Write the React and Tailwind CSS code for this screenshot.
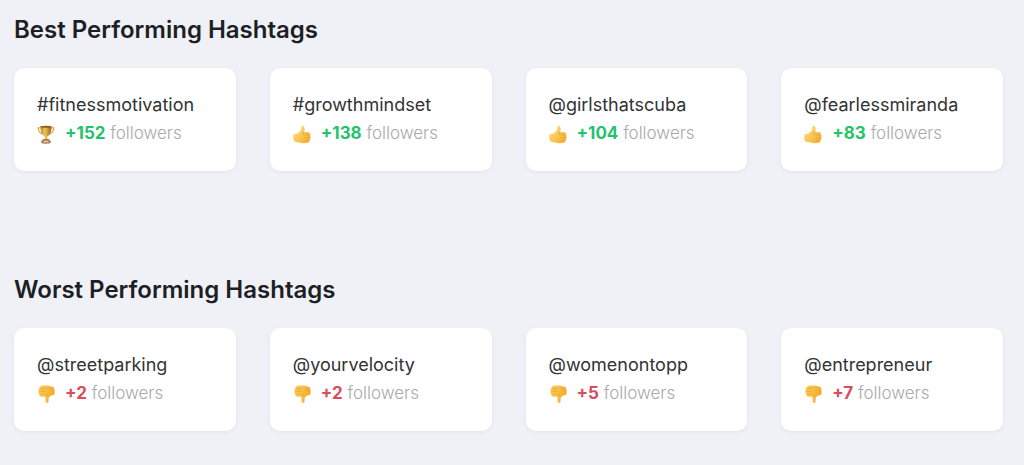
import React from 'react';

const best = [
  { name: '#fitnessmotivation', count: 152, icon: 'trophy' },
  { name: '#growthmindset', count: 138, icon: 'up' },
  { name: '@girlsthatscuba', count: 104, icon: 'up' },
  { name: '@fearlessmiranda', count: 83, icon: 'up' }
];

const worst = [
  { name: '@streetparking', count: 2, icon: 'down' },
  { name: '@yourvelocity', count: 2, icon: 'down' },
  { name: '@womenontopp', count: 5, icon: 'down' },
  { name: '@entrepreneur', count: 7, icon: 'down' }
];

function Trophy() {
  return (
    <svg className="w-[18px] h-5 shrink-0" viewBox="0 0 18 20" aria-hidden="true">
      <defs>
        <linearGradient id="cup" x1="0" x2="1" y1="0" y2="0">
          <stop offset="0" stopColor="#b9801f" />
          <stop offset="0.4" stopColor="#f0c75a" />
          <stop offset="1" stopColor="#9a6213" />
        </linearGradient>
      </defs>
      <g transform="translate(0 .8)">
        <path d="M4.500 3H1.200c0 3.600 1.600 5.600 5 6.400M13.500 3h3.300c0 3.600-1.600 5.600-5 6.400" fill="none" stroke="#d9a746" strokeWidth="1.200" />
        <path d="M3.500 1.500h11c0 5.300-1.200 8.700-4.300 10.300v3H7.800v-3C4.700 10.200 3.500 6.800 3.500 1.500z" fill="url(#cup)" />
        <ellipse cx="9" cy="1.900" rx="5.500" ry="1" fill="#8f5f17" />
        <path d="M6.500 14.300h5l2.200 2v1.500c0 1.600-9.400 1.600-9.400 0v-1.500z" fill="#a8764c" />
        <path d="M6.500 15.900h5v1.700h-5z" fill="#e6c88c" />
      </g>
    </svg>
  )
}

function ThumbUp() {
  return (
    <svg className="w-[18px] h-5 shrink-0" viewBox="0 0 18 20" aria-hidden="true">
      <defs>
        <linearGradient id="handUp" x1="0" x2="1" y1="0" y2="1">
          <stop offset="0" stopColor="#ffe083" />
          <stop offset="1" stopColor="#f2ae2c" />
        </linearGradient>
      </defs>
      <path d="M.6 10.300c1.600-.2 3.100-.6 4.500-1.400C6.900 7.900 8 6.700 8.300 5l.3-2.400c.2-1.200 2-1.200 2.600.1.700 1.600.5 3.500 0 5.300h4c1.500 0 2.100 1.400 1.500 2.500 1.200.7 1.300 2.200.4 3.100.7.900.5 2.200-.6 2.700.2 1.300-.7 2.300-2 2.500-3 .6-6.200.5-9-.5L1.200 17.400C.2 15.300 0 12.600.6 10.300z" fill="url(#handUp)" />
      <path d="M10.800 8c-.9.800-1.100 1.800-.8 2.700M12 10.800h4.500M11.700 13.700h5M12 16.300h4" fill="none" stroke="#dc962a" strokeWidth=".6" strokeLinecap="round" />
    </svg>
  )
}

function ThumbDown() {
  return (
    <svg className="w-[18px] h-5 shrink-0" viewBox="0 0 18 20" aria-hidden="true">
      <defs>
        <linearGradient id="handDown" x1="0" x2="1" y1="0" y2="0">
          <stop offset="0" stopColor="#ffcf58" />
          <stop offset="1" stopColor="#f0a92c" />
        </linearGradient>
      </defs>
      <path d="M16.800 3.300c.9 2.200 1.100 5 .5 7.400-1.600.3-3.200.7-4.300 1.600-1 .9-1.300 2-1.400 3.400l-.2 2.500c-.2 1.200-2 1.100-2.600-.1-.7-1.600-.4-3.500.1-5.300h-4.600c-1.600 0-2.200-1.400-1.600-2.500C1.300 9.700 1 8.200 1.900 7.200 1.100 6.300 1.400 4.900 2.600 4.400c-.2-1.400.7-2.400 2.100-2.600 3-.6 6.300-.6 9 .4z" fill="url(#handDown)" />
      <path d="M9 12.800c1-.8 1.300-1.800.9-2.700M2.700 10.100h4.500M2 7.200h5.400M2.700 4.500h4.500" fill="none" stroke="#dc962a" strokeWidth=".6" strokeLinecap="round" />
    </svg>
  )
}

const icons = { trophy: Trophy, up: ThumbUp, down: ThumbDown };

function HashtagCard(props) {
  const Icon = icons[props.item.icon];
  return (
    <li className="bg-white rounded-[10px] shadow-[0_1px_4px_rgba(30,40,70,0.06)] pl-[23px] pr-3 pt-[22px] pb-[23px] leading-[29px] whitespace-nowrap">
      <p className="text-[18px] leading-[29px] text-[#333336]">{props.item.name}</p>
      <div className="flex items-center gap-[10px] text-[17px] leading-[29px]">
        <Icon />
        <p className="font-light text-[#a9a9ad]">
          <span className={props.item.icon == 'down' ? 'font-bold text-[#d94c59]' : 'font-bold text-[#24c36b]'}>
            +{props.item.count}
          </span> followers
        </p>
      </div>
    </li>
  )
}

function HashtagSection(props) {
  return (
    <section>
      <h2 className="text-[24px] leading-9 font-semibold text-[#1d1f26]">{props.title}</h2>
      <ul className="grid grid-cols-4 gap-[34px] mt-5">
        {props.items.map(item => <HashtagCard key={item.name} item={item} />)}
      </ul>
    </section>
  )
}

function App() {
  return (
    <main className="min-h-screen bg-[#f0f1f6] pl-[14px] pr-[21px] pt-3 pb-8 flex flex-col gap-[101px] font-['Inter','Open_Sans',sans-serif]">
      <HashtagSection title="Best Performing Hashtags" items={best} />
      <HashtagSection title="Worst Performing Hashtags" items={worst} />
    </main>
  )
}

export default App;
